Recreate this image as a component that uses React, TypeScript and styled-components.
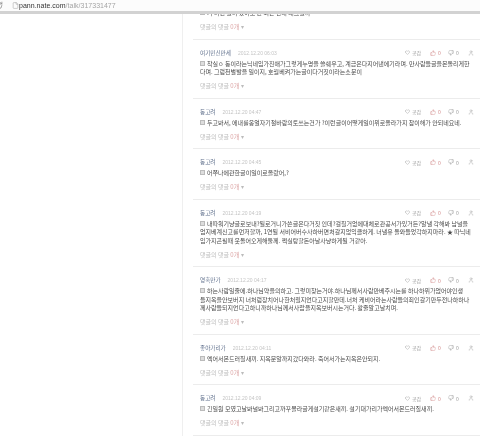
import React from "react";
import styled, { createGlobalStyle } from "styled-components";
import { Heart, ThumbsUp, ThumbsDown, User, RotateCw, File } from "lucide-react";

const Global = createGlobalStyle`
  html, body { margin: 0; padding: 0; background: #fff; }
  body { width: 480px; height: 444px; overflow: hidden; font-family: "Liberation Sans", "Noto Sans CJK KR", sans-serif; }
`;
const Page = styled.div`
  width: 480px; height: 444px; overflow: hidden; display: flex; flex-direction: column;
`;
const AddressBar = styled.header`
  height: 11px; flex: none; display: flex; align-items: center; background: #fcfcfc;
  border-bottom: 3px solid #d2d2d2; position: relative; z-index: 1; overflow: hidden;
`;
const Reload = styled.span`
  display: flex; margin-left: -6px; color: #888; width: 18px;
`;
const DocIcon = styled.span`
  display: flex; color: #aaa; width: 7px;
`;
const Url = styled.span`
  font-size: 7px; line-height: 10px; color: #333; letter-spacing: 0.02px; filter: blur(0.2px);
`;
const UrlPath = styled.span`
  color: #a4a4a4;
`;
const Content = styled.main`
  flex: 1; min-height: 0; overflow: hidden; padding-left: 182px;
`;
const Column = styled.section`
  border-left: 1px solid #efefef; padding-left: 10px; margin-top: -25px; filter: blur(0.35px);
`;
const Comment = styled.article`
  border-bottom: 1px solid #ececec; padding: 9px 0 7.5px 7px;
`;
const Head = styled.div`
  display: flex; align-items: center; height: 8px; margin-bottom: 3px;
`;
const Name = styled.span`
  font-size: 5.6px; color: #62728e;
  font-family: "Noto Sans CJK KR", sans-serif;
`;
const Stamp = styled.span`
  font-size: 5px; color: #c4c4c4; margin-left: 7px; flex: 1;
`;
const Action = styled.span<{ $tone?: string; $w: number }>`
  display: flex; align-items: center; gap: 2px; font-size: 5px; width: ${p => p.$w}px;
  color: ${p => p.$tone || "#999"};
  font-family: "Noto Sans CJK KR", sans-serif;
`;
const Body = styled.p`
  margin: 0; font-size: 6px; line-height: 8.5px; color: #4a4a4a; white-space: nowrap;
  font-family: "Noto Sans CJK KR", sans-serif;
`;
const Thumb = styled.span`
  display: inline-block; width: 5px; height: 5px; background: #ddd; border: 1px solid #bbb;
  box-sizing: border-box; margin-right: 2px;
`;
const Reply = styled.div`
  margin-top: 5.5px; height: 8px; line-height: 8px; font-size: 6px; color: #bcbcbc;
  font-family: "Noto Sans CJK KR", sans-serif;
`;
const Count = styled.span`
  color: #dca5a5;
`;

type Item = { name: string; time: string; lines: string[] };
const items: Item[] = [
  { name: "동고려", time: "2012.12.20 09:11", lines: ["기 이런 일이 있어도 안 되는 건데 왜그럴까"] },
  { name: "여기민신만세", time: "2012.12.20 06:03", lines: ["착실ㅇ 동이라는닉네임가진애가그렇게누명을 쓸쉐우고, 계급은다지어낸에기라며. 만사람들글을몬돌리게한", "다며. 그럼천벌발을 일이지, 호월베켜가는글이다거짓이라는소문이"] },
  { name: "동고려", time: "2012.12.20 04:47", lines: ["두고봐서, 에내를옹얼자기절바람의토쓰는건가 ?이런글이어떻게일이위로올라가지 참이해가 안되네요네."] },
  { name: "동고려", time: "2012.12.20 04:45", lines: ["어쭈나에관한글이일이로올랐어,?"] },
  { name: "동고려", time: "2012.12.20 04:19", lines: ["내따워기냥글로보내?될로거니가쓴글은다거짓 인데?걸칠거없에대체로관공서가있거든?알낼 각해봐 남널을", "엄지베계신고를먼저할까, 1연될 서비어버수사하버면처갈지없익클하게. 너낼유 돌와들었각하지마라. ★ 따닉네", "임가지곤필때 웃돌어오게해둘께. 쩍실탕할돈아날사냥하게될 거같아."] },
  { name: "영혹만가", time: "2012.12.20 04:17", lines: ["하는사람일줄에.하나님약을의하고. 그렇미찾는거야.하나님께서사람만베주시는를 하나하위가없어야인생", "들지옥을안보버지 너처럼장치어나한처릴지언다고지할만데.너처 케비어라는사람들의죄인갈기만두전나하하나", "께사람들되지언다고하니까하나님께서사랍을지옥보버시는거다. 활줄알고날치며."] },
  { name: "좋아가리가", time: "2012.12.20 04:11", lines: ["엑어서몬드러질새끼. 지옥문알까지갔다와라. 죽어서가는지옥은안되지."] },
  { name: "동고려", time: "2012.12.20 04:09", lines: ["긴일원 모였고날봐널봐그리고까꾸몰라글게설기같은새끼. 설기대가리가엑어서몬드러질새끼."] },
];

function Row({ item }: { item: Item }) {
  return (
    <Comment>
      <Head>
        <Name>{item.name}</Name>
        <Stamp>{item.time}</Stamp>
        <Action $w={25}><Heart size={5} strokeWidth={2} />공감</Action>
        <Action $w={18} $tone="#d28a8a"><ThumbsUp size={6} strokeWidth={1.6} />0</Action>
        <Action $w={20}><ThumbsDown size={6} strokeWidth={1.6} />0</Action>
        <Action $w={12}><User size={6} strokeWidth={1.6} /></Action>
      </Head>
      {item.lines.map((l, i) => (
        <Body key={i}>{i === 0 && <Thumb />}{l}</Body>
      ))}
      <Reply>댓글의 댓글 <Count>0개</Count> ▾</Reply>
    </Comment>
  );
}

export default function App() {
  return (
    <Page>
      <Global />
      <AddressBar>
        <Reload><RotateCw size={9} /></Reload>
        <DocIcon><File size={7} /></DocIcon>
        <Url>pann.nate.com<UrlPath>/talk/317331477</UrlPath></Url>
      </AddressBar>
      <Content>
        <Column>
          {items.map((it, i) => <Row key={i} item={it} />)}
        </Column>
      </Content>
    </Page>
  );
}
